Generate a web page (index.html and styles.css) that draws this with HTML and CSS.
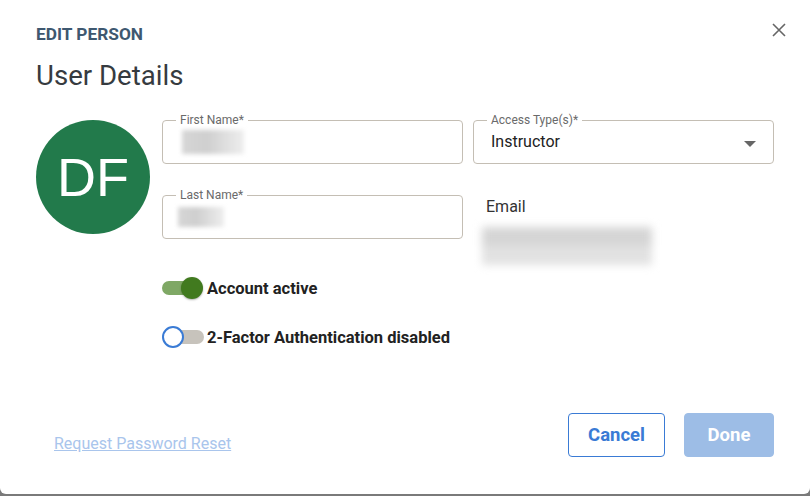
FILE: index.html
```html
<!DOCTYPE html>
<html lang="en">
<head>
<meta charset="utf-8">
<title>Edit Person</title>
<link rel="stylesheet" href="styles.css">
</head>
<body>
<div class="backdrop">
  <div class="dialog">
    <div class="header">
      <div class="eyebrow">EDIT PERSON</div>
      <button class="close" aria-label="Close">
        <svg width="14" height="14" viewBox="0 0 14 14"><path d="M1 1L13 13M13 1L1 13" stroke="#666" stroke-width="1.6" fill="none"/></svg>
      </button>
    </div>
    <h1 class="title">User Details</h1>
    <div class="content">
      <div class="avatar">DF</div>
      <div class="main">
        <div class="grid">
          <div class="field">
            <span class="field-label">First Name*</span>
            <div class="blur blur-first"></div>
          </div>
          <div class="field">
            <span class="field-label">Access Type(s)*</span>
            <span class="field-value">Instructor</span>
            <span class="caret"></span>
          </div>
          <div class="field">
            <span class="field-label">Last Name*</span>
            <div class="blur blur-last"></div>
          </div>
          <div class="email">
            <div class="email-label">Email</div>
            <div class="blur blur-email"></div>
          </div>
        </div>
        <div class="toggles">
          <div class="toggle-row">
            <span class="switch on"><span class="track"></span><span class="thumb"></span></span>
            <span class="toggle-label">Account active</span>
          </div>
          <div class="toggle-row">
            <span class="switch off"><span class="track"></span><span class="thumb"></span></span>
            <span class="toggle-label">2-Factor Authentication disabled</span>
          </div>
        </div>
      </div>
    </div>
    <div class="footer">
      <a class="reset" href="#">Request Password Reset</a>
      <div class="actions">
        <button class="btn btn-outline">Cancel</button>
        <button class="btn btn-primary">Done</button>
      </div>
    </div>
  </div>
</div>
</body>
</html>
```
FILE: styles.css
```css
html, body {
  margin: 0;
  padding: 0;
}
body {
  background: #7a7a7a;
  font-family: Roboto, "Liberation Sans", Arial, sans-serif;
  color: #333;
}
.backdrop {
  width: 810px;
  height: 496px;
  overflow: hidden;
}
.dialog {
  width: 810px;
  height: 494px;
  box-sizing: border-box;
  background: #fff;
  border-radius: 0 0 6px 6px;
  padding: 24px 36px 0 36px;
  display: flex;
  flex-direction: column;
}
.header {
  display: flex;
  justify-content: space-between;
  align-items: flex-start;
}
.eyebrow {
  font-size: 17.3px;
  line-height: 20px;
  font-weight: 700;
  color: #3e5870;
  letter-spacing: 0;
}
.close {
  border: 0;
  background: none;
  padding: 0;
  margin: -1px -12px 0 0;
  width: 14px;
  height: 14px;
  display: flex;
}
.title {
  margin: 16px 0 0 0;
  font-size: 27.6px;
  line-height: 32px;
  font-weight: 400;
  color: #363b40;
}
.content {
  display: flex;
  margin-top: 28px;
  gap: 12px;
}
.avatar {
  width: 114px;
  height: 114px;
  border-radius: 50%;
  background: #227a4b;
  color: #fff;
  font-family: "Liberation Sans", Arial, sans-serif;
  font-size: 54px;
  display: flex;
  align-items: center;
  justify-content: center;
  flex: none;
}
.main {
  flex: 1;
}
.grid {
  display: grid;
  grid-template-columns: 301px 301px;
  column-gap: 10px;
  row-gap: 31px;
}
.field {
  position: relative;
  height: 44px;
  box-sizing: border-box;
  border: 1px solid #c4beb4;
  border-radius: 4px;
  display: flex;
  align-items: center;
  padding: 4px 17px 0 17px;
}
.field-label {
  position: absolute;
  top: -8px;
  left: 13px;
  padding: 0 4px;
  background: #fff;
  font-size: 12px;
  line-height: 14px;
  color: #6a6a6a;
}
.field-value {
  font-size: 16px;
  color: #222;
  margin-top: -5px;
}
.caret {
  margin-left: auto;
  width: 0;
  height: 0;
  border-left: 6px solid transparent;
  border-right: 6px solid transparent;
  border-top: 6px solid #666;
}
.blur {
  background: linear-gradient(90deg, #d6d6d6, #cfcfcf 40%, #eee);
  filter: blur(2px);
}
.blur-first {
  width: 62px;
  height: 24px;
  margin-top: -4px;
  margin-left: 2px;
}
.blur-last {
  width: 46px;
  height: 20px;
  margin-top: -4px;
  margin-left: -2px;
}
.email {
  padding-left: 13px;
}
.email-label {
  font-size: 16px;
  line-height: 20px;
  color: #333;
  margin-top: 2px;
}
.blur-email {
  width: 170px;
  height: 38px;
  margin-top: 10px;
  margin-left: -4px;
  background: linear-gradient(180deg, #d5d5d5 0 45%, #e2e2e2 55% 100%);
  filter: blur(4px);
}
.toggles {
  display: flex;
  flex-direction: column;
  gap: 27px;
  margin-top: 12px;
}
.toggle-row {
  display: flex;
  align-items: center;
  height: 22px;
}
.switch {
  position: relative;
  width: 42px;
  height: 22px;
  flex: none;
  margin-right: 3px;
}
.track {
  position: absolute;
  left: 0;
  top: 4px;
  width: 40px;
  height: 14px;
  border-radius: 7px;
}
.thumb {
  position: absolute;
  top: 0;
  width: 22px;
  height: 22px;
  border-radius: 50%;
  box-sizing: border-box;
}
.switch.on .track {
  background: #7fa865;
}
.switch.on .thumb {
  left: 19px;
  background: #417a1f;
  box-shadow: 0 1px 2px rgba(0,0,0,0.3);
}
.switch.off .track {
  left: 4px;
  width: 38px;
  background: #c7c3bc;
}
.switch.off .thumb {
  left: 0;
  background: #fff;
  border: 2px solid #3a7bd5;
}
.toggle-label {
  font-size: 16.5px;
  font-weight: 700;
  color: #222;
}
.footer {
  margin-top: auto;
  margin-bottom: 37px;
  display: flex;
  align-items: center;
  justify-content: space-between;
}
.reset {
  margin-left: 18px;
  margin-top: 16px;
  font-size: 16px;
  color: #a9c5ec;
  text-decoration: underline;
}
.actions {
  display: flex;
  gap: 19px;
}
.btn {
  height: 44px;
  border-radius: 4px;
  font-family: Roboto, "Liberation Sans", Arial, sans-serif;
  font-size: 18.5px;
  font-weight: 700;
  padding: 0;
  box-sizing: border-box;
}
.btn-outline {
  width: 97px;
  background: #fff;
  border: 1px solid #3a7bd5;
  color: #3a7bd5;
}
.btn-primary {
  width: 90px;
  background: #9dbde6;
  border: 1px solid #9dbde6;
  color: #fff;
}
```
